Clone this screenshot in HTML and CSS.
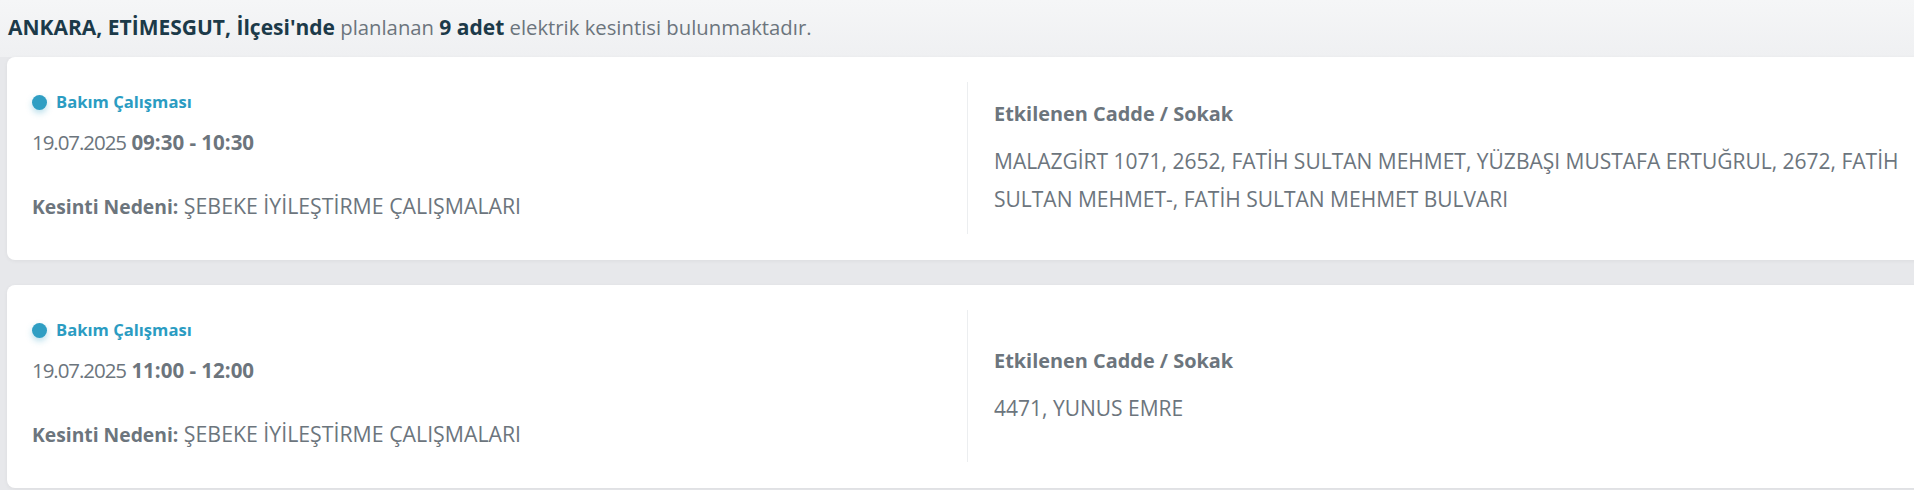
FILE: index.html
```html
<!DOCTYPE html>
<html lang="tr">
<head>
<meta charset="utf-8">
<title>Planlı Kesintiler</title>
<link rel="stylesheet" href="styles.css">
</head>
<body>
<div class="page">
  <header class="summary">
    <p class="summary-text"><strong>ANKARA, ETİMESGUT, İlçesi'nde</strong> planlanan <strong>9 adet</strong> elektrik kesintisi bulunmaktadır.</p>
  </header>
  <div class="list">
    <article class="card">
      <div class="card-left">
        <div class="badge"><span class="dot"></span>Bakım Çalışması</div>
        <div class="date"><span class="day">19.07.2025</span> <b>09:30 - 10:30</b></div>
        <div class="reason"><b>Kesinti Nedeni:</b> ŞEBEKE İYİLEŞTİRME ÇALIŞMALARI</div>
      </div>
      <div class="card-right">
        <div class="streets-title">Etkilenen Cadde / Sokak</div>
        <div class="streets">MALAZGİRT 1071, 2652, FATİH SULTAN MEHMET, YÜZBAŞI MUSTAFA ERTUĞRUL, 2672, FATİH SULTAN MEHMET-, FATİH SULTAN MEHMET BULVARI</div>
      </div>
    </article>
    <article class="card">
      <div class="card-left">
        <div class="badge"><span class="dot"></span>Bakım Çalışması</div>
        <div class="date"><span class="day">19.07.2025</span> <b>11:00 - 12:00</b></div>
        <div class="reason"><b>Kesinti Nedeni:</b> ŞEBEKE İYİLEŞTİRME ÇALIŞMALARI</div>
      </div>
      <div class="card-right">
        <div class="streets-title">Etkilenen Cadde / Sokak</div>
        <div class="streets">4471, YUNUS EMRE</div>
      </div>
    </article>
  </div>
</div>
</body>
</html>
```

FILE: styles.css
```css
html, body {
  margin: 0;
  padding: 0;
}
body {
  background: #e7e8eb;
  font-family: "Open Sans", "Liberation Sans", sans-serif;
  color: #6c757d;
  overflow: hidden;
  width: 1914px;
  height: 490px;
}
.page {
  display: flex;
  flex-direction: column;
}
.summary {
  background: linear-gradient(180deg, #f5f6f7 0%, #eff0f2 100%);
  padding: 13px 8px 16px;
}
.summary-text {
  margin: 0;
  font-size: 20.3px;
  line-height: 28px;
  color: #6c757d;
  white-space: nowrap;
}
.summary-text strong {
  color: #1c3a49;
  font-weight: 700;
  font-size: 21px;
}
.list {
  display: flex;
  flex-direction: column;
  gap: 25px;
  padding-left: 7px;
}
.card {
  display: flex;
  width: 1920px;
  flex: 0 0 auto;
  background: #ffffff;
  border-radius: 8px;
  box-shadow: 0 1px 4px rgba(0, 0, 0, 0.05);
  padding: 25px 0 26px;
}
.card-left {
  flex: 0 0 960px;
  box-sizing: border-box;
  padding: 8px 25px 12px;
  display: flex;
  flex-direction: column;
}
.badge {
  display: flex;
  align-items: center;
  gap: 9px;
  font-size: 16.6px;
  line-height: 24px;
  font-weight: 700;
  color: #2b9cc2;
}
.dot {
  width: 15px;
  height: 15px;
  border-radius: 50%;
  background: #2f9ec3;
  box-shadow: 0 3px 6px rgba(47, 158, 195, 0.35);
}
.date {
  margin-top: 12px;
  font-size: 20.5px;
  line-height: 32px;
}
.date .day {
  letter-spacing: -1.05px;
}
.date b {
  font-weight: 700;
}
.reason {
  margin-top: 33px;
  font-size: 21.3px;
  line-height: 30px;
}
.reason b {
  font-weight: 700;
  font-size: 19.3px;
}
.card-right {
  flex: 1 1 auto;
  border-left: 1px solid #eceef0;
  padding: 0 26px;
  display: flex;
  flex-direction: column;
  justify-content: center;
}
.streets-title {
  font-size: 19.9px;
  line-height: 30px;
  font-weight: 700;
}
.streets {
  margin-top: 13px;
  font-size: 21px;
  line-height: 38px;
}
```
